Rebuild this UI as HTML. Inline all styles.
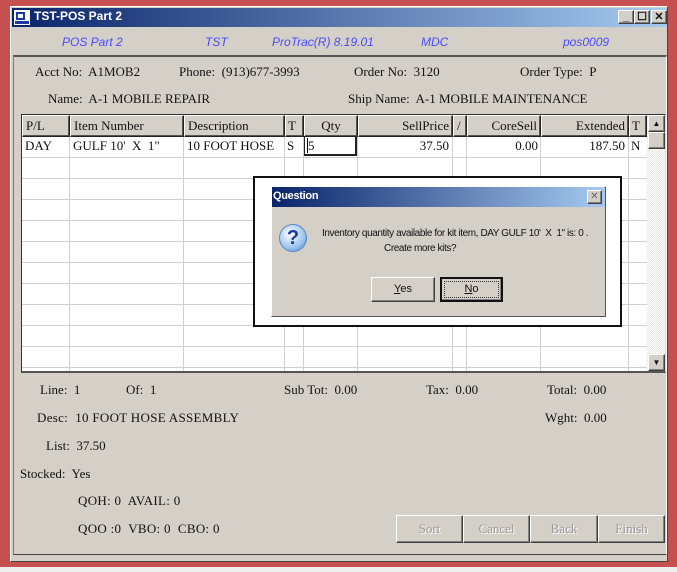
<!DOCTYPE html>
<html><head><meta charset="utf-8"><style>
*{margin:0;padding:0;box-sizing:border-box}
body{width:677px;height:572px;background:#eeeeee;position:relative;overflow:hidden;font-family:"Liberation Serif",serif;font-size:13px;color:#111}
.a{position:absolute;white-space:nowrap}
.hb{font-family:"Liberation Sans",sans-serif;font-style:italic;color:#4a4aff;font-size:12px}
.btn{position:absolute;background:#d4d0c8;border:1px solid;border-color:#fff #404040 #404040 #fff;box-shadow:inset -1px -1px 0 #808080;text-align:center}
.hc{position:absolute;top:0;height:22px;background:#d4d0c8;border:1px solid #222;border-top-color:#fff;border-left-color:#fff;box-shadow:inset -1px -1px 0 #555;padding:0 3px;line-height:20px}
.bt{letter-spacing:0.3px}
</style></head><body>
<div class="a" style="left:0;top:0;width:677px;height:567px;background:#c65050"></div>
<div class="a" style="left:10px;top:6px;width:658px;height:556px;background:#d4d0c8;border:1px solid #fff;border-right-color:#444;border-bottom-color:#444"></div>
<div class="a" style="left:12px;top:8px;width:655px;height:19px;background:linear-gradient(90deg,#0a246a,#a6caf0)"></div>
<div class="a" style="left:14px;top:10px;width:16px;height:15px;background:#fff;border:1px solid #fff"><div style="position:absolute;left:1px;top:1px;width:9px;height:8px;background:#1a3aa0"></div><div style="position:absolute;left:3px;top:3px;width:5px;height:4px;background:#fff"></div><div style="position:absolute;left:0;top:10px;width:14px;height:3px;background:#1a3aa0"></div></div>
<div class="a" style="left:34px;top:9px;color:#fff;font-family:'Liberation Sans',sans-serif;font-weight:bold;font-size:12px">TST-POS Part 2</div>
<div class="btn" style="left:618px;top:10px;width:16px;height:14px;font:bold 11px 'Liberation Sans';line-height:12px">_</div>
<div class="btn" style="left:634px;top:10px;width:16px;height:14px;font:bold 11px 'Liberation Sans';line-height:12px">☐</div>
<div class="btn" style="left:651px;top:10px;width:16px;height:14px;font:bold 11px 'Liberation Sans';line-height:12px">✕</div>
<div class="a hb" style="left:62px;top:35px">POS Part 2</div>
<div class="a hb" style="left:205px;top:35px">TST</div>
<div class="a hb" style="left:272px;top:35px">ProTrac(R) 8.19.01</div>
<div class="a hb" style="left:421px;top:35px">MDC</div>
<div class="a hb" style="left:563px;top:35px">pos0009</div>
<div class="a" style="left:13px;top:55px;width:654px;height:500px;border:1px solid #808080;border-top:2px solid #555;border-right-color:#fff;border-bottom-color:#444"></div>
<div class="a" style="left:35px;top:64px">Acct No:&nbsp; A1MOB2</div>
<div class="a" style="left:179px;top:64px">Phone:&nbsp; (913)677-3993</div>
<div class="a" style="left:354px;top:64px">Order No:&nbsp; 3120</div>
<div class="a" style="left:520px;top:64px">Order Type:&nbsp; P</div>
<div class="a" style="left:48px;top:91px">Name:&nbsp; A-1 MOBILE REPAIR</div>
<div class="a" style="left:348px;top:91px">Ship Name:&nbsp; A-1 MOBILE MAINTENANCE</div>
<div class="a" style="left:21px;top:114px;width:645px;height:259px;background:#fff;border:1px solid #333;border-right-color:#ddd;border-bottom:2px solid #555;overflow:hidden">
<div style="position:absolute;left:0;top:0;width:626px;height:260px;background:repeating-linear-gradient(180deg,transparent 0 20px,#d0d0d0 20px 21px);background-position:0 22px"></div>
<div style="position:absolute;left:47px;top:0;width:1px;height:260px;background:#d0d0d0"></div>
<div style="position:absolute;left:161px;top:0;width:1px;height:260px;background:#d0d0d0"></div>
<div style="position:absolute;left:262px;top:0;width:1px;height:260px;background:#d0d0d0"></div>
<div style="position:absolute;left:281px;top:0;width:1px;height:260px;background:#d0d0d0"></div>
<div style="position:absolute;left:335px;top:0;width:1px;height:260px;background:#d0d0d0"></div>
<div style="position:absolute;left:430px;top:0;width:1px;height:260px;background:#d0d0d0"></div>
<div style="position:absolute;left:444px;top:0;width:1px;height:260px;background:#d0d0d0"></div>
<div style="position:absolute;left:518px;top:0;width:1px;height:260px;background:#d0d0d0"></div>
<div style="position:absolute;left:606px;top:0;width:1px;height:260px;background:#d0d0d0"></div>
<div class="hc" style="left:0;width:48px">P/L</div>
<div class="hc" style="left:48px;width:114px">Item Number</div>
<div class="hc" style="left:162px;width:101px">Description</div>
<div class="hc" style="left:263px;width:19px;padding:0 2px">T</div>
<div class="hc" style="left:282px;width:54px;text-align:center">Qty</div>
<div class="hc" style="left:336px;width:95px;text-align:right">SellPrice</div>
<div class="hc" style="left:431px;width:14px;padding:0 3px">/</div>
<div class="hc" style="left:445px;width:74px;text-align:right">CoreSell</div>
<div class="hc" style="left:519px;width:88px;text-align:right">Extended</div>
<div class="hc" style="left:607px;width:18px;padding:0 2px">T</div>
<div class="a" style="left:3px;top:23px">DAY</div>
<div class="a" style="left:51px;top:23px">GULF 10'&nbsp; X&nbsp; 1"</div>
<div class="a" style="left:165px;top:23px">10 FOOT HOSE</div>
<div class="a" style="left:265px;top:23px">S</div>
<div class="a" style="left:282px;top:21px;width:53px;height:20px;border:2px solid #222;border-top-width:1px;border-left-width:1px;padding-left:2px;line-height:17px"><span style="border-left:1px solid #000">5</span></div>
<div class="a" style="left:336px;top:23px;width:91px;text-align:right">37.50</div>
<div class="a" style="left:445px;top:23px;width:71px;text-align:right">0.00</div>
<div class="a" style="left:519px;top:23px;width:84px;text-align:right">187.50</div>
<div class="a" style="left:609px;top:23px">N</div>
<div style="position:absolute;left:625px;top:0;width:19px;height:260px;background:repeating-conic-gradient(#e8e6e0 0 25%,#fff 0 50%) 0 0/2px 2px"></div>
<div class="btn" style="left:626px;top:0;width:17px;height:17px;font-size:8px;line-height:15px">▲</div>
<div class="btn" style="left:626px;top:17px;width:17px;height:17px"></div>
<div class="btn" style="left:626px;top:239px;width:17px;height:17px;font-size:8px;line-height:15px">▼</div>
</div>
<div class="a" style="left:253px;top:176px;width:369px;height:151px;background:#fff;border:2px solid #111"></div>
<div class="a" style="left:271px;top:186px;width:335px;height:131px;background:#d4d0c8;border:1px solid #fff;border-right-color:#555;border-bottom-color:#555"></div>
<div class="a" style="left:272px;top:187px;width:333px;height:20px;background:linear-gradient(90deg,#0a246a,#a6caf0)"></div>
<div class="a" style="left:273px;top:190px;color:#fff;font:bold 11px 'Liberation Sans',sans-serif;letter-spacing:-0.3px">Question</div>
<div class="btn" style="left:587px;top:190px;width:15px;height:14px;font:10px 'Liberation Sans';line-height:12px;color:#666">✕</div>
<div class="a" style="left:279px;top:224px;width:28px;height:28px;border-radius:50%;background:radial-gradient(circle at 40% 35%,#fff,#9cc4ee 60%,#4a7ec4);border:1px solid #5a86c0;text-align:center;font:bold 20px 'Liberation Sans';color:#1a3a9a;line-height:27px">?</div>
<div class="a" style="left:322px;top:228px;font:10px 'Liberation Sans',sans-serif;letter-spacing:-0.4px">Inventory quantity available for kit item, DAY GULF 10'&nbsp; X&nbsp; 1" is: 0 .</div>
<div class="a" style="left:384px;top:243px;font:10px 'Liberation Sans',sans-serif;letter-spacing:-0.4px">Create more kits?</div>
<div class="btn" style="left:371px;top:277px;width:64px;height:25px;font:11px 'Liberation Sans';line-height:22px"><u>Y</u>es</div>
<div class="btn" style="left:440px;top:277px;width:63px;height:25px;font:11px 'Liberation Sans';line-height:20px;border:2px solid #111"><span style="border:1px dotted #333;display:block;margin:2px;height:17px;line-height:15px"><u>N</u>o</span></div>
<div class="a" style="left:40px;top:382px">Line:&nbsp; 1</div>
<div class="a" style="left:126px;top:382px">Of:&nbsp; 1</div>
<div class="a" style="left:284px;top:382px">Sub Tot:&nbsp; 0.00</div>
<div class="a" style="left:426px;top:382px">Tax:&nbsp; 0.00</div>
<div class="a" style="left:547px;top:382px">Total:&nbsp; 0.00</div>
<div class="a bt" style="left:37px;top:410px">Desc:&nbsp; 10 FOOT HOSE ASSEMBLY</div>
<div class="a" style="left:545px;top:410px">Wght:&nbsp; 0.00</div>
<div class="a" style="left:46px;top:438px">List:&nbsp; 37.50</div>
<div class="a" style="left:20px;top:466px">Stocked:&nbsp; Yes</div>
<div class="a bt" style="left:78px;top:493px">QOH: 0&nbsp; AVAIL: 0</div>
<div class="a bt" style="left:78px;top:521px">QOO :0&nbsp; VBO: 0&nbsp; CBO: 0</div>
<div class="btn" style="left:396px;top:515px;width:67px;height:28px;line-height:25px;color:#999;text-shadow:1px 1px 0 #fff">Sort</div>
<div class="btn" style="left:463px;top:515px;width:67px;height:28px;line-height:25px;color:#999;text-shadow:1px 1px 0 #fff">Cancel</div>
<div class="btn" style="left:530px;top:515px;width:68px;height:28px;line-height:25px;color:#999;text-shadow:1px 1px 0 #fff">Back</div>
<div class="btn" style="left:598px;top:515px;width:67px;height:28px;line-height:25px;color:#999;text-shadow:1px 1px 0 #fff">Finish</div>
</body></html>
